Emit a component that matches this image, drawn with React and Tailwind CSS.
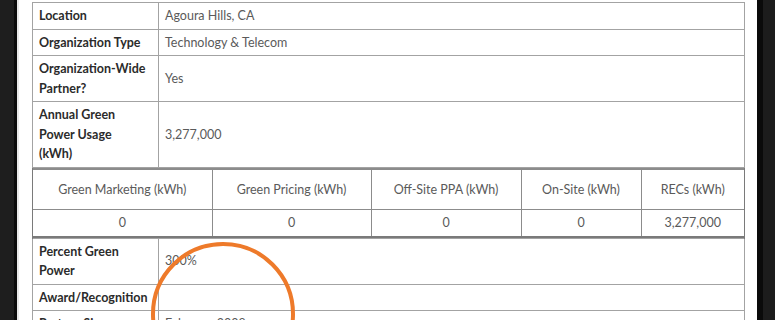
import React from 'react';

const rows = [
  { label: ['Location'], value: 'Agoura Hills, CA' },
  { label: ['Organization Type'], value: 'Technology & Telecom' },
  { label: ['Organization-Wide', 'Partner?'], value: 'Yes' },
  { label: ['Annual Green', 'Power Usage', '(kWh)'], value: '3,277,000' },
];

const sources = [
  { name: 'Green Marketing (kWh)', value: '0', w: 'w-[179px]' },
  { name: 'Green Pricing (kWh)', value: '0', w: 'w-[159px]' },
  { name: 'Off-Site PPA (kWh)', value: '0', w: 'w-[150px]' },
  { name: 'On-Site (kWh)', value: '0', w: 'w-[120px]' },
  { name: 'RECs (kWh)', value: '3,277,000', w: '' },
];

const after = [
  { label: ['Percent Green', 'Power'], value: '300%' },
  { label: ['Award/Recognition'], value: '' },
  { label: ['Partner Since'], value: 'February 2008' },
];

function InfoRow({ label, value }) {
  return (
    <tr>
      <th className="w-[126px] border border-[#a3a3a3] px-[6px] py-[3px] text-left align-middle font-bold text-[#2b2b2b]">
        {label.map((l) => (
          <div key={l} className="whitespace-nowrap">{l}</div>
        ))}
      </th>
      <td className="border border-[#a3a3a3] px-[6px] py-[3px] align-middle text-[#5a5a5a]">{value}</td>
    </tr>
  );
}

export default function App() {
  return (
    <div className="relative flex h-[320px] w-[775px] overflow-hidden bg-[#1c1c1c] font-['Lato',sans-serif] text-[12.5px] leading-[19.5px]">
      <div className="w-[14px] bg-[#1e1e1e]" />
      <div className="w-[3px] bg-[#0b0b0b]" />
      <div className="w-[2px] bg-[#e8e8e8]" />
      <div className="w-[738px] bg-white pl-[13px] pt-[2px]">
        <table className="w-[713px] table-fixed border-collapse">
          <tbody>
            {rows.map((r) => (
              <InfoRow key={r.label[0]} {...r} />
            ))}
            <tr>
              <td colSpan={2} className="border-x border-[#7a7a7a] p-0">
                <table className="w-full table-fixed border-collapse text-center text-[#5a5a5a]">
                  <tbody>
                    <tr>
                      {sources.map((s, i) => (
                        <td
                          key={s.name}
                          className={`${s.w} border-t-2 border-b border-[#8c8c8c] py-[10px] ${i > 0 ? 'border-l' : ''}`}
                        >
                          {s.name}
                        </td>
                      ))}
                    </tr>
                    <tr>
                      {sources.map((s, i) => (
                        <td
                          key={s.name}
                          className={`border-b-2 border-[#7a7a7a] py-[3px] ${i > 0 ? 'border-l border-l-[#8c8c8c]' : ''}`}
                        >
                          {s.value}
                        </td>
                      ))}
                    </tr>
                  </tbody>
                </table>
              </td>
            </tr>
            {after.map((r) => (
              <InfoRow key={r.label[0]} {...r} />
            ))}
          </tbody>
        </table>
      </div>
      <div className="w-[6px] bg-[#0a0a0a]" />
      <div className="flex-1 bg-[#1c1c1c]" />

      <svg className="absolute left-0 top-0" width="775" height="320" viewBox="0 0 775 320">
        <circle cx="223" cy="314" r="70" fill="none" stroke="#ee7a2a" strokeWidth="4" />
      </svg>
    </div>
  );
}
